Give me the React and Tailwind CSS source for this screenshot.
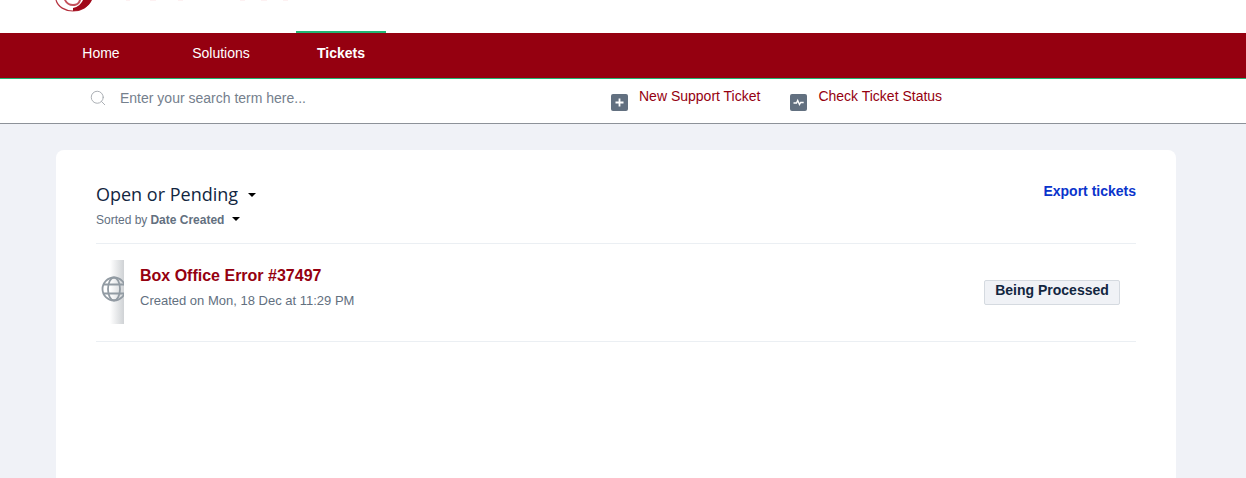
import { Search } from 'lucide-react'

const Caret = ({ className = '' }) => (
  <span className={`inline-block w-0 h-0 border-x-[4px] border-x-transparent border-t-[4px] border-t-black ${className}`} />
)

const NavItem = ({ label, active }) => (
  <a className={`relative w-[90px] flex items-center justify-center pb-[4px] text-[14px] text-white ${active ? 'font-bold' : ''}`}>
    {active && <span className="absolute left-0 right-0 -top-[2px] h-[2px] bg-[#22b573]" />}
    {label}
  </a>
)

// bottom of the logo, cut off by the top of the window
const Logo = () => (
  <svg width="240" height="12" viewBox="0 0 240 12" className="ml-[54px] block">
    <path d="M2 0 C4 7 11 11 19 11 C27 11 34 7 36 0" fill="none" stroke="#b5323f" strokeWidth="1.2" />
    <path d="M19 11 C27 11 35 7 38 0 H29 C27 4 24 7 19 8 Z" fill="#a0091a" />
    <path d="M10 0 C12 4 15 6 19 6 C23 6 26 4 27 0 H25 C24 3 22 4 19 4 C16 4 14 3 12 0 Z" fill="#c4505b" />
    <g fill="#fdf1f2">
      <rect x="72" y="0" width="4" height="1" />
      <rect x="96" y="0" width="6" height="1" />
      <rect x="124" y="0" width="5" height="1" />
      <rect x="186" y="0" width="5" height="1" />
      <rect x="207" y="0" width="6" height="1" />
      <rect x="229" y="0" width="5" height="1" />
    </g>
  </svg>
)

const App = () => {
  return (
    <div className="h-[478px] overflow-hidden bg-[#f0f2f7] font-['Liberation_Sans',Arial,sans-serif]">
      <div className="h-[33px] bg-white">
        <Logo />
      </div>

      <nav className="h-[46px] bg-[#950010] border-b border-[#22b573] flex gap-[30px] pl-[56px]">
        <NavItem label="Home" />
        <NavItem label="Solutions" />
        <NavItem label="Tickets" active />
      </nav>

      <div className="h-[45px] bg-white border-b border-[#8d9299] flex items-center pb-[6px]">
        <Search size={18} strokeWidth={1.25} className="ml-[89px] text-[#a6abb0]" />
        <span className="ml-[13px] w-[491px] text-[14px] text-[#75808d]">Enter your search term here...</span>
        <div className="flex items-center">
          <span className="w-[17px] h-[17px] rounded-[2px] bg-[#627080] flex items-center justify-center mt-[9px]">
            <svg width="11" height="11" viewBox="0 0 11 11" stroke="#fff" strokeWidth="1.8" fill="none"><path d="M5.5 1.5v8M1.5 5.5h8" /></svg>
          </span>
          <a className="ml-[11px] -mt-[4px] text-[14px] text-[#950010]">New Support Ticket</a>
          <span className="ml-[30px] w-[17px] h-[17px] rounded-[2px] bg-[#627080] flex items-center justify-center mt-[9px]">
            <svg width="13" height="11" viewBox="0 0 13 11" stroke="#fff" strokeWidth="1.4" fill="none"><path d="M1.5 6h3l1.2-2.5 1.8 4 1.2-2h3" /></svg>
          </span>
          <a className="ml-[11px] -mt-[4px] text-[14px] text-[#950010]">Check Ticket Status</a>
        </div>
      </div>

      <main className="mt-[26px] ml-[56px] w-[1120px] h-[400px] bg-white rounded-t-[8px] px-[40px] pt-[31px]">
        <div className="h-[63px] border-b border-[#ebeff3] flex justify-between">
          <div>
            <div className="flex items-center text-[18px] leading-[27px] text-[#12263f] font-['Open_Sans',sans-serif]">
              Open or Pending
              <Caret className="ml-[10px]" />
            </div>
            <div className="flex items-center mt-[3px] text-[12px] text-[#63707f]">
              Sorted by <b className="ml-[3px]">Date Created</b>
              <Caret className="ml-[8px] -mt-[3px]" />
            </div>
          </div>
          <a className="-mt-[1px] text-[14px] font-bold text-[#0a34cc] leading-[22px]">Export tickets</a>
        </div>

        <div className="h-[98px] border-b border-[#ebeff3] flex items-center">
          <div className="w-[28px] h-[64px] -mt-[2px] pb-[6px] overflow-hidden bg-gradient-to-r from-white from-50% to-[#cfd2d5] flex items-center">
            <svg width="26" height="26" viewBox="0 0 26 26" fill="none" stroke="#929ba3" strokeWidth="1.8" className="ml-[5px] shrink-0">
              <circle cx="13" cy="13" r="11.5" />
              <ellipse cx="13" cy="13" rx="6" ry="11.5" />
              <path d="M2 8.5h22M2 17.5h22" />
            </svg>
          </div>
          <div className="ml-[16px] flex-1 pb-[11px]">
            <div className="text-[16px] font-bold leading-[22px] text-[#950010]">Box Office Error #37497</div>
            <div className="mt-[5px] text-[13px] leading-[18px] text-[#63707f]">Created on Mon, 18 Dec at 11:29 PM</div>
          </div>
          <div className="mr-[16px] w-[136px] h-[25px] bg-[#f0f2f6] border border-[#d5dae0] rounded-[2px] text-center text-[14px] font-bold leading-[19px] text-[#12263f]">
            Being Processed
          </div>
        </div>
      </main>
    </div>
  )
}

export default App
